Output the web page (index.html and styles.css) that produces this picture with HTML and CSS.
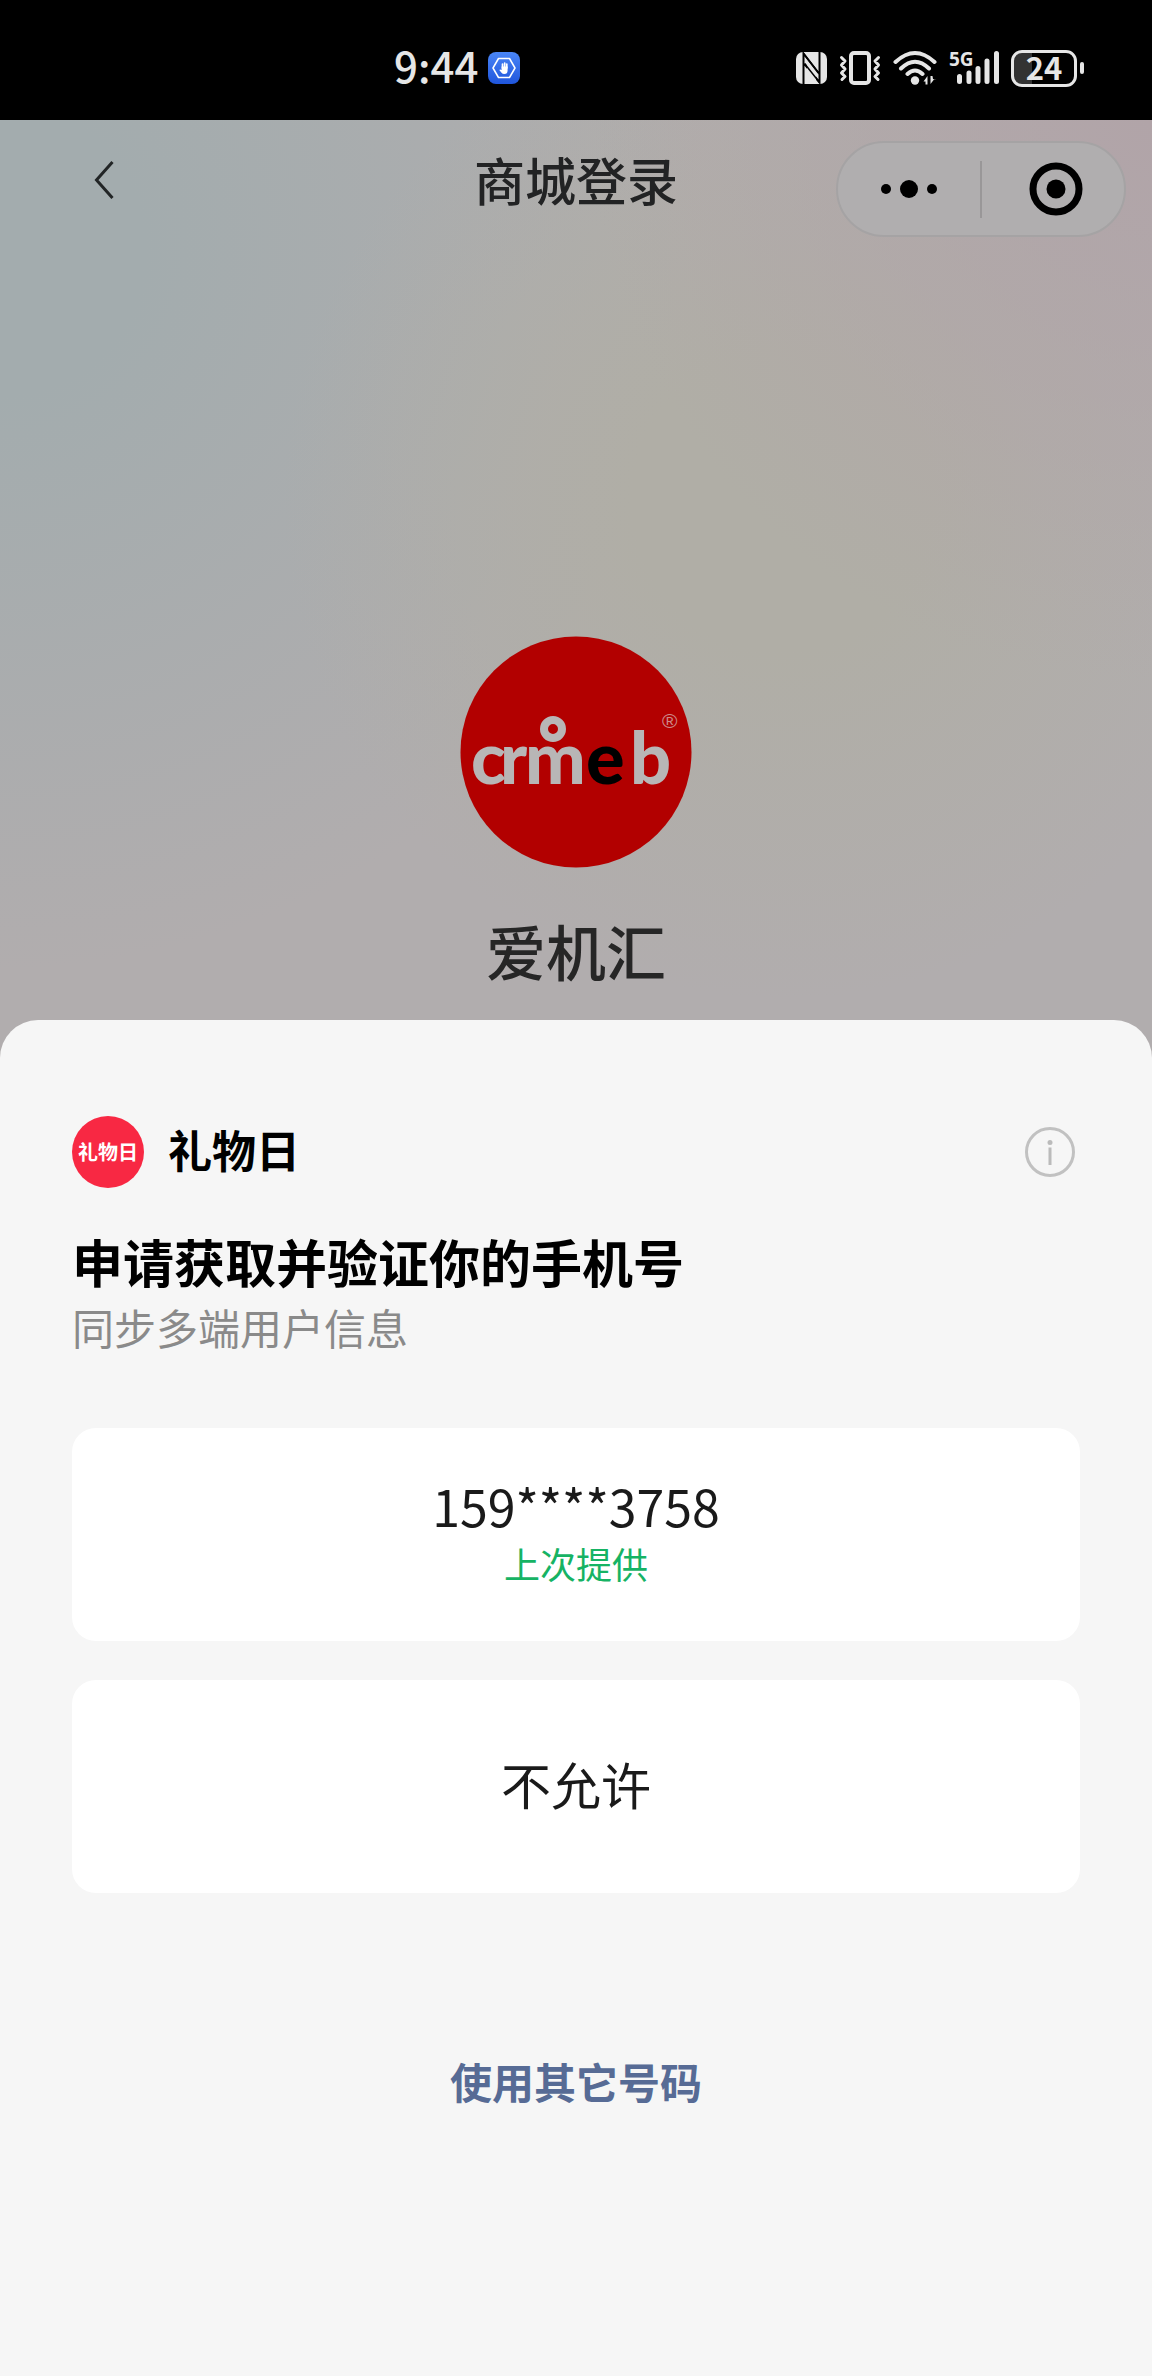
FILE: index.html
```html
<!DOCTYPE html>
<html lang="zh-CN">
<head>
<meta charset="utf-8">
<meta name="viewport" content="width=device-width, initial-scale=1">
<title>商城登录</title>
<link rel="stylesheet" href="styles.css">
</head>
<body>
<div class="status-bar">
  <div class="status-left">
    <time class="clock">9:44</time>
    <svg class="hand-badge" width="32" height="32" viewBox="0 0 32 32" aria-hidden="true">
      <defs><linearGradient id="badge" x1="0" y1="0" x2="0" y2="1"><stop offset="0" stop-color="#4a86f7"/><stop offset="1" stop-color="#1f55dc"/></linearGradient></defs>
      <rect width="32" height="32" rx="8" fill="url(#badge)"/>
      <path d="M10.500 6.500h11l5.500 9.500-5.500 9.500h-11L5 16z" fill="none" stroke="#fff" stroke-width="1.500" stroke-linejoin="round"/>
      <path d="M14.500 16v-4M16.700 15v-4M18.800 16v-4" stroke="#fff" stroke-width="1.700" stroke-linecap="round"/>
      <path d="M13.600 14.500h6v4q0 3.500-3.300 3.500-1.800 0-3-1.500l-2-2.500q.8-1.200 2.300 0z" fill="#fff"/>
    </svg>
  </div>
  <div class="status-right">
    <svg width="31" height="34" viewBox="0 0 31 34" aria-label="NFC">
      <rect y="1" width="31" height="32" rx="7" fill="#e6e6e6"/>
      <path d="M7.500 33V2.500L22.500 22M23.500 1v30.500L8.500 13" fill="none" stroke="#000" stroke-width="2"/>
      <path d="M11 12.500v7.500L20 31v-7.500z" fill="#e6e6e6"/>
      <path d="M7.500 2.500 23.500 23M8.500 12.500l15 19" stroke="#000" stroke-width="1.500"/>
    </svg>
    <svg width="42" height="36" viewBox="0 0 42 36" fill="none" stroke="#e6e6e6" stroke-linecap="round" stroke-linejoin="round" aria-label="振动">
      <rect x="12" y="3" width="18" height="30" rx="3" stroke-width="4"/>
      <path d="M2.500 7.500 6 11l-3.500 4L6 19l-3.500 4L6 26.500 3 29.500M39.500 7.500 36 11l3.500 4L36 19l3.500 4-3.500 3.500 3 3" stroke-width="3"/>
    </svg>
    <svg width="44" height="36" viewBox="0 0 44 36" fill="none" stroke="#e6e6e6" stroke-width="4" stroke-linecap="round" aria-label="无线网络">
      <path d="M2.500 12Q22-6 41.500 12M8 18.500Q22 5 36 18.500M14.500 24Q22 17 29.500 24"/>
      <circle cx="22" cy="30.500" r="4.200" fill="#e6e6e6" stroke="none"/>
      <path d="M30.500 31.500 34.500 26v8.500h-2v-3zM43.500 29.500h-2.500L37.500 34V26h2l.5 3z" fill="#e6e6e6" stroke="none"/>
    </svg>
    <div class="signal">
      <span class="signal-type">5G</span>
      <svg width="50" height="36" viewBox="0 0 50 36" stroke="#e6e6e6" stroke-width="5" stroke-linecap="round" aria-label="信号">
        <path d="M10.500 26.500v5M20 23v8.500M29 18.500v13M38 11v20.500M47.500 3.500v28"/>
      </svg>
    </div>
    <div class="battery"><span class="battery-body">24</span><span class="battery-tip"></span></div>
  </div>
</div>

<div class="page">
  <header class="nav">
    <button class="back" type="button" aria-label="返回">
      <svg width="22" height="40" viewBox="0 0 22 40" fill="none" stroke="#222526" stroke-width="3"><path d="M18.500 2 2.500 20l16 18"/></svg>
    </button>
    <h1 class="nav-title">商城登录</h1>
    <div class="capsule">
      <button type="button" aria-label="更多">
        <svg width="58" height="20" viewBox="0 0 58 20"><circle cx="6" cy="10" r="5"/><circle cx="29" cy="10" r="9"/><circle cx="52" cy="10" r="5"/></svg>
      </button>
      <span class="capsule-line"></span>
      <button class="capsule-close" type="button" aria-label="关闭">
        <svg width="54" height="54" viewBox="0 0 54 54"><circle cx="27" cy="27" r="23" fill="none" stroke="#000" stroke-width="7"/><circle cx="27" cy="27" r="9.500"/></svg>
      </button>
    </div>
  </header>

  <section class="shop">
    <svg class="shop-logo" width="232" height="232" viewBox="0 0 232 232" role="img" aria-label="crmeb">
      <circle cx="116" cy="116" r="115.500" fill="#b20000"/>
      <text class="wordmark" y="148"><tspan x="11 40 65">crm</tspan><tspan class="ink" x="126">e</tspan><tspan x="170">b</tspan></text>
      <circle cx="93" cy="93" r="9" fill="none" stroke="#b8b6b6" stroke-width="8"/>
      <text class="registered" x="202" y="92">®</text>
    </svg>
    <h2 class="shop-name">爱机汇</h2>
  </section>

  <main class="sheet">
    <div class="applicant">
      <span class="avatar">礼物日</span>
      <span class="applicant-name">礼物日</span>
      <button class="info" type="button" aria-label="说明">
        <svg width="50" height="50" viewBox="0 0 50 50"><circle cx="25" cy="25" r="23.500" fill="none" stroke="#c1c1c1" stroke-width="3"/><circle cx="25" cy="15.500" r="2.500" fill="#bbb"/><path d="M25 20.500V38" stroke="#bbb" stroke-width="3"/></svg>
      </button>
    </div>
    <h2 class="request">申请获取并验证你的手机号</h2>
    <p class="purpose">同步多端用户信息</p>
    <div class="choices">
      <button class="choice" type="button">
        <span class="choice-main">159****3758</span>
        <span class="choice-note">上次提供</span>
      </button>
      <button class="choice" type="button"><span class="choice-main">不允许</span></button>
    </div>
    <a class="other" href="#">使用其它号码</a>
  </main>
</div>
</body>
</html>
```
FILE: styles.css
```css
* { box-sizing: border-box; }

body {
  margin: 0;
  min-height: 100vh;
  display: flex;
  flex-direction: column;
  font-family: "Noto Sans CJK SC", sans-serif;
  color: #1a1a1a;
}

h1, h2, p { margin: 0; }

button {
  display: flex;
  align-items: center;
  justify-content: center;
  padding: 0;
  border: 0;
  background: none;
  font: inherit;
  color: inherit;
  cursor: pointer;
}

svg { display: block; flex: none; }

/* Phone status bar */
.status-bar {
  height: 120px;
  padding: 16px 68px 0 394px;
  display: flex;
  align-items: center;
  justify-content: space-between;
  background: #000;
  color: #e6e6e6;
}

.status-left { display: flex; align-items: center; gap: 10px; }
.clock { padding-bottom: 6px; font-size: 42px; line-height: 48px; font-weight: 500; }
.status-right { display: flex; align-items: center; gap: 12px; }
.signal { position: relative; }

.signal-type {
  position: absolute;
  left: 0;
  top: 0;
  font: 700 19px/19px "Open Sans", sans-serif;
}

.battery { display: flex; align-items: center; gap: 3px; }

.battery-body {
  width: 66px;
  height: 37px;
  border: 3px solid #e6e6e6;
  border-radius: 11px;
  background: linear-gradient(90deg, #333 30%, #000 30%);
  font-size: 31px;
  line-height: 28px;
  font-weight: 700;
  text-align: center;
}

.battery-tip { width: 4px; height: 12px; border-radius: 2px; background: #e6e6e6; }

/* Dimmed login page */
.page {
  flex: 1;
  display: flex;
  flex-direction: column;
  background:
    radial-gradient(circle 560px at 100% 0, #b1a4a8 0, #b1a4a800 100%),
    radial-gradient(circle 500px at 68% 380px, #b0aea6 30%, #b0aea600 100%),
    radial-gradient(circle 720px at 0 130px, #a3acae 20%, #a3acae00 100%),
    #b1adae;
}

.nav {
  height: 138px;
  padding: 0 26px;
  display: grid;
  grid-template-columns: 1fr auto 1fr;
  align-items: center;
}

.back { width: 36px; height: 60px; margin: 0 0 18px 61px; }

.nav-title {
  padding-bottom: 20px;
  font-size: 51px;
  line-height: 60px;
  font-weight: 500;
  color: #222324;
}

.capsule {
  justify-self: end;
  width: 290px;
  height: 96px;
  display: grid;
  grid-template-columns: 1fr 2px 1fr;
  align-items: center;
  border: 2px solid #a5a3a4;
  border-radius: 48px;
  background: #b0aeaf;
}

.capsule-line { height: 57px; background: #999798; }
.capsule-close { padding-left: 6px; }

.shop {
  display: flex;
  flex-direction: column;
  align-items: center;
  padding: 378px 0 32px;
}

.wordmark { font: 900 72px Lato, sans-serif; fill: #b8b6b6; }
.wordmark .ink { fill: #000; }
.registered { font: 400 21px "Liberation Sans", sans-serif; fill: #c88; }

.shop-name {
  margin-top: 44px;
  font-size: 60px;
  line-height: 76px;
  font-weight: 500;
  color: #262626;
}

/* Phone number authorisation sheet */
.sheet {
  flex: 1;
  padding: 96px 72px 72px;
  border-radius: 38px 38px 0 0;
  background: #f6f6f6;
}

.applicant { display: flex; align-items: center; gap: 24px; padding-right: 5px; }

.avatar {
  width: 72px;
  height: 72px;
  border-radius: 50%;
  background: #f82843;
  color: #fff;
  font-size: 20px;
  line-height: 72px;
  font-weight: 700;
  text-align: center;
}

.applicant-name {
  padding-bottom: 6px;
  font-size: 44px;
  line-height: 60px;
  font-weight: 700;
  color: #000;
}

.info { margin-left: auto; }

.request {
  margin-top: 37px;
  font-size: 51px;
  line-height: 72px;
  font-weight: 700;
  color: #000;
}

.purpose { font-size: 42px; line-height: 60px; color: #8a8a8a; }

.choices { display: grid; gap: 39px; margin-top: 71px; }

.choice {
  flex-direction: column;
  height: 213px;
  padding-bottom: 8px;
  border-radius: 24px;
  background: #fff;
}

.choice-main { font-size: 50px; line-height: 64px; }
.choice-note { font-size: 36px; line-height: 52px; color: #16b364; }

.other {
  display: block;
  width: fit-content;
  margin: 158px auto 0;
  font-size: 42px;
  line-height: 60px;
  font-weight: 700;
  color: #576b95;
  text-decoration: none;
}
```
